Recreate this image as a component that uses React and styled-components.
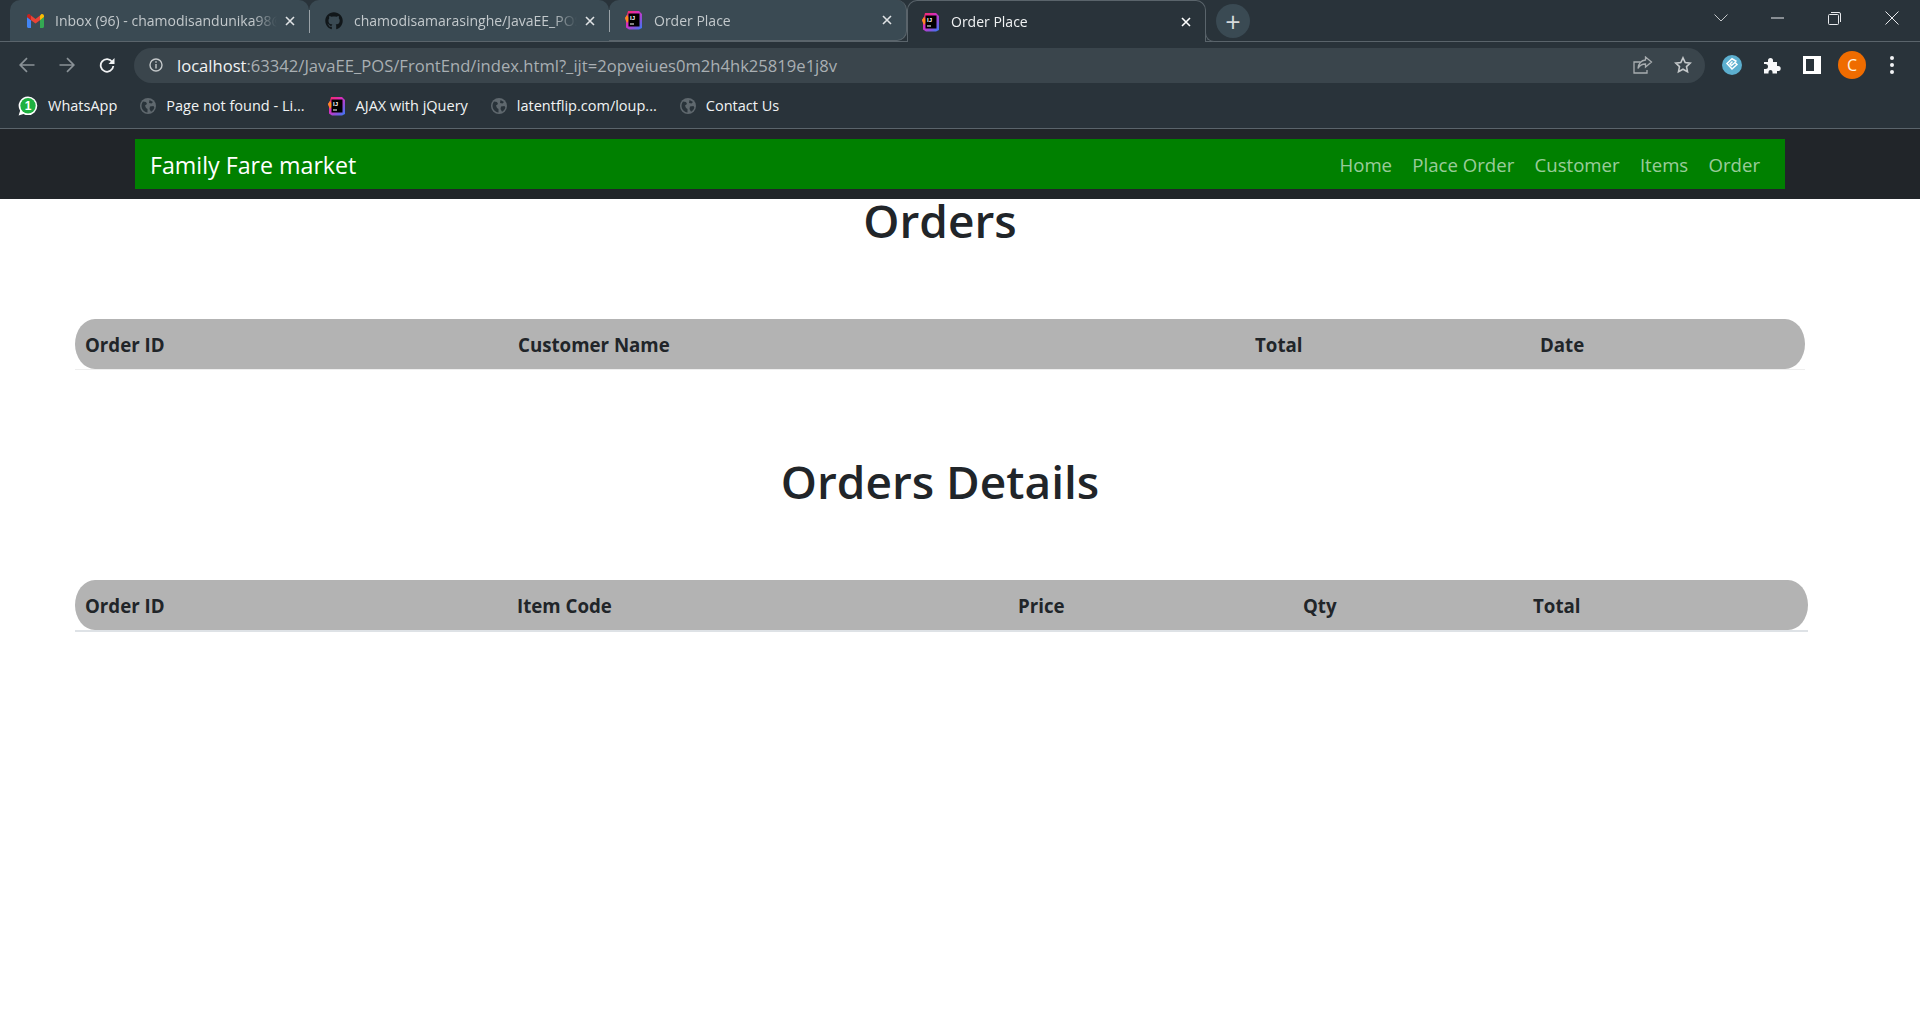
import React from 'react';
import styled, { createGlobalStyle } from 'styled-components';
import { FaGithub } from 'react-icons/fa';

const CHROME = '#29333a';
const TAB = '#3a4a53';
const LINE = '#5a646b';
const UI_FONT = '"Open Sans", "Noto Sans", sans-serif';

const GlobalStyle = createGlobalStyle`
  * { box-sizing: border-box; }
  html, body { margin: 0; background: #ffffff; }
  body { font-family: ${UI_FONT}; color: #212529; min-height: 1030px; overflow: hidden; }
`;

/* ---- small drawings ---- */

const GmailIcon = () => (
  <svg width="17" height="14" viewBox="0 0 17 14">
    <path d="M0 3v9.5C0 13.3.7 14 1.5 14H4V6z" fill="#4285f4" />
    <path d="M17 3v9.5c0 .8-.7 1.5-1.5 1.5H13V6z" fill="#34a853" />
    <path d="M4 6.2V1.5L8.5 5 13 1.5v4.7L8.5 9.6z" fill="#ea4335" />
    <path d="M0 3V2C0 .4 1.8-.5 3 .4l1 1.1v4.7z" fill="#c5221f" />
    <path d="M17 3V2c0-1.6-1.8-2.5-3-1.600l-1 1.100v4.700z" fill="#fbbc04" />
  </svg>
);

const IdeaIcon = ({ id }) => (
  <svg width="18" height="20" viewBox="0 0 18 20">
    <defs>
      <linearGradient id={id} x1="0" y1="0" x2="1" y2="1">
        <stop offset="0" stopColor="#fe2857" />
        <stop offset="0.45" stopColor="#d42fc4" />
        <stop offset="1" stopColor="#2f7cf6" />
      </linearGradient>
    </defs>
    <path d="M3 1h11l3 3v14l-3 1.500H4l-3-2V11L0 8l2-3z" fill={`url(#${id})`} />
    <path d="M0 8l2-3 3 4-3 4z" fill="#ff8a1e" />
    <rect x="3.500" y="3.500" width="11" height="13" fill="#000000" />
    <text x="5" y="9.500" fontSize="6" fontWeight="700" fontFamily="Liberation Sans, sans-serif" fill="#ffffff">IJ</text>
    <rect x="5" y="13.500" width="4" height="1" fill="#ffffff" />
  </svg>
);

const WhatsappIcon = () => (
  <svg width="20" height="20" viewBox="0 0 20 20">
    <path d="M10 .5a9.300 9.300 0 0 1 0 18.600c-1.700 0-3.200-.4-4.500-1.200L.6 19.400l1.500-4.700A9.300 9.300 0 0 1 10 .5z" fill="#ffffff" />
    <circle cx="10" cy="9.800" r="7.700" fill="#1fb141" />
    <text x="10" y="14" textAnchor="middle" fontSize="12" fontWeight="700" fontFamily="Liberation Sans, sans-serif" fill="#ffffff">1</text>
  </svg>
);

const GlobeIcon = () => (
  <svg width="16" height="16" viewBox="0 0 16 16">
    <circle cx="8" cy="8" r="8" fill="#5f686e" />
    <path d="M3 3.500l3 .5 1 2-2 1.500L6 10l1.500 1V14.500C4 14 1.500 11 1.500 8c0-1.800.6-3.300 1.500-4.500zM9.500 2l3.500 2-1.500 1.500-2.500-.5zM10 8.500l3.500-.5.800 1.500c-.5 2-1.600 3.400-3.300 4.200L9.500 11z" fill={CHROME} />
  </svg>
);

const ArrowIcon = ({ $flip }) => (
  <svg width="16" height="16" viewBox="0 0 16 16" fill="none" stroke="#8a9297" strokeWidth="1.700" transform={$flip ? 'scale(-1 1)' : undefined}>
    <path d="M15.500 8H1.500M8 1.200L1.200 8 8 14.800" />
  </svg>
);

const ReloadIcon = () => (
  <svg width="16" height="16" viewBox="0 0 16 16" fill="none">
    <path d="M13.300 5A6.300 6.300 0 1 0 14.300 9" stroke="#f1f3f4" strokeWidth="1.800" />
    <path d="M15.500 1v6h-6z" fill="#f1f3f4" />
  </svg>
);

const InfoIcon = () => (
  <svg width="14" height="14" viewBox="0 0 14 14" fill="none">
    <circle cx="7" cy="7" r="6" stroke="#c4c8ca" strokeWidth="1.400" />
    <path d="M7 6v4.500M7 3.300v1.500" stroke="#c4c8ca" strokeWidth="1.400" />
  </svg>
);

const ShareIcon = () => (
  <svg width="20" height="18" viewBox="0 0 20 18" fill="none" stroke="#a8adb0" strokeWidth="1.300">
    <path d="M7.500 6H1v11h13v-3" />
    <path d="M12.500 1l6 5-6 5V8C9 8 6.500 9.500 5 12.500 5.500 8 8 4.500 12.500 4z" />
  </svg>
);

const StarIcon = () => (
  <svg width="18" height="18" viewBox="0 0 18 18" fill="none" stroke="#c4c8ca" strokeWidth="1.600">
    <path d="M9 1.800l2.200 4.700 5 .600-3.700 3.500 1 5.100L9 13.200l-4.500 2.500 1-5.100L1.800 7.100l5-.600z" />
  </svg>
);

const ExtensionBadge = () => (
  <svg width="20" height="20" viewBox="0 0 20 20" fill="none">
    <circle cx="10" cy="10" r="10" fill="#5cafcf" />
    <path d="M14.500 6.500L10 3.800 5 8.500l5 5.500 5-4.500-2-2-3.500 3-1.500-1.500 2.500-2.500" stroke="#ffffff" strokeWidth="1.500" />
  </svg>
);

const PuzzleIcon = () => (
  <svg width="18" height="18" viewBox="0 0 18 18">
    <path d="M1 6h4V4.500a2.500 2.500 0 0 1 5 0V6h4v4h1.200a2.500 2.500 0 0 1 0 5H14v2.500H9.500V16a2 2 0 0 0-4 0v1.500H1V13h1.500a2.500 2.500 0 0 0 0-5H1z" fill="#f8f9fa" />
  </svg>
);

const PanelIcon = () => (
  <svg width="18" height="18" viewBox="0 0 18 18">
    <path d="M0 0h18v18H0z" fill="#ffffff" />
    <path d="M3 3h8v12H3z" fill={CHROME} />
  </svg>
);

const MinimizeIcon = () => (
  <svg width="14" height="2" viewBox="0 0 14 2"><path d="M0 1h13" stroke="#e8eaed" strokeWidth="1" /></svg>
);

const RestoreIcon = () => (
  <svg width="13" height="13" viewBox="0 0 13 13" fill="none" stroke="#e8eaed" strokeWidth="1">
    <rect x=".5" y="2.500" width="10" height="10" rx="1" />
    <path d="M3 .5h8a1.500 1.500 0 0 1 1.500 1.500v8" />
  </svg>
);

const CloseIcon = () => (
  <svg width="14" height="14" viewBox="0 0 14 14" fill="none" stroke="#e8eaed" strokeWidth="1"><path d="M.5.5l13 13M13.500.5l-13 13" /></svg>
);

const ChevronIcon = () => (
  <svg width="14" height="8" viewBox="0 0 14 8" fill="none" stroke="#c4c8ca" strokeWidth="1"><path d="M.5.5L7 7 13.500.5" /></svg>
);

const TabCloseIcon = ({ $active }) => (
  <svg width="10" height="10" viewBox="0 0 10 10" fill="none" stroke={$active ? '#ffffff' : '#dfe2e4'} strokeWidth="1.600"><path d="M1 1l8 8M9 1l-8 8" /></svg>
);

/* ---- browser chrome ---- */

const Chrome = styled.header`
  background: ${CHROME};
  border-bottom: 1px solid ${LINE};
`;

const TabStrip = styled.div`
  display: flex;
  height: 42px;
  padding-left: 10px;
  border-bottom: 1px solid ${LINE};
`;

const Tab = styled.div`
  position: relative;
  display: flex;
  align-items: center;
  flex: 0 0 ${(p) => p.$width}px;
  min-width: 0;
  height: ${(p) => (p.$active ? 42 : 41)}px;
  padding: 0 14px 0 ${(p) => (p.$active ? 14 : 16)}px;
  background: ${(p) => (p.$active ? CHROME : TAB)};
  color: ${(p) => (p.$active ? '#f1f3f4' : '#c3c9cc')};
  border-radius: 10px 10px ${(p) => (p.$beforeActive ? '10px' : '0')} 0;
  ${(p) => p.$active && `border: 1px solid ${LINE}; border-bottom: 0;`}
  ${(p) => p.$beforeActive && `border-right: 1px solid ${LINE}; border-bottom: 1px solid ${LINE};`}

  &::before {
    content: '';
    display: ${(p) => (p.$divider ? 'block' : 'none')};
    position: absolute;
    left: 0;
    top: 10px;
    bottom: 8px;
    width: 1px;
    background: #9aa2a7;
  }

  &::after {
    content: '';
    display: ${(p) => (p.$active ? 'block' : 'none')};
    position: absolute;
    left: 100%;
    bottom: 0;
    width: 9px;
    height: 9px;
    background: ${CHROME};
    border-left: 1px solid ${LINE};
    border-bottom: 1px solid ${LINE};
    border-bottom-left-radius: 9px;
  }
`;

const Favicon = styled.span`
  display: flex;
  justify-content: center;
  flex: 0 0 18px;
  margin-right: 11px;
`;

const TabTitle = styled.span`
  flex: 1;
  min-width: 0;
  font-size: 14px;
  white-space: nowrap;
  overflow: hidden;
  mask-image: linear-gradient(to right, #000 calc(100% - 24px), transparent);
`;

const TabClose = styled.span`
  display: flex;
  flex: 0 0 10px;
  margin-left: 8px;
`;

const NewTab = styled.div`
  display: flex;
  align-items: center;
  justify-content: center;
  width: 34px;
  height: 34px;
  margin: 4px 0 0 10px;
  border-radius: 50%;
  background: ${TAB};
  color: #d5d9db;
  font-size: 27px;
  font-weight: 400;
  line-height: 1;
`;

const WindowButtons = styled.div`
  display: flex;
  margin-left: auto;
`;

const WindowButton = styled.div`
  display: flex;
  align-items: center;
  justify-content: center;
  width: 57px;
  height: 36px;
`;

const Toolbar = styled.div`
  display: flex;
  align-items: center;
  height: 47px;
  padding: 5px 0 6px 7px;
`;

const ToolButton = styled.div`
  display: flex;
  align-items: center;
  justify-content: center;
  flex: 0 0 ${(p) => p.$width || 40}px;
`;

const AddressBar = styled.div`
  display: flex;
  align-items: center;
  flex: 0 0 1571px;
  height: 35px;
  margin-left: 7px;
  padding: 0 2px 0 15px;
  background: #3a454c;
  border-radius: 18px;
`;

const Url = styled.div`
  flex: 1;
  margin-left: 14px;
  font-size: 16.600px;
  color: #a9afb3;
  white-space: nowrap;

  b {
    font-weight: 400;
    color: #f1f3f4;
  }
`;

const ToolbarActions = styled.div`
  display: flex;
  align-items: center;
  margin-left: 7px;
`;

const Avatar = styled.div`
  display: flex;
  align-items: center;
  justify-content: center;
  width: 28px;
  height: 28px;
  border-radius: 50%;
  background: #ef6c00;
  color: #fff3e0;
  font-size: 16px;
`;

const KebabDots = styled.div`
  display: flex;
  flex-direction: column;
  gap: 3px;

  i {
    display: block;
    width: 4px;
    height: 4px;
    border-radius: 50%;
    background: #f1f3f4;
  }
`;

const BookmarksBar = styled.div`
  display: flex;
  align-items: center;
  height: 39px;
  padding: 0 0 6px 18px;
`;

const Bookmark = styled.div`
  display: flex;
  align-items: center;
  gap: 10px;
  margin-right: 23px;
  color: #f1f3f4;
  font-size: 14.500px;
  white-space: nowrap;
`;

/* ---- page ---- */

const Navbar = styled.nav`
  padding: 10px 135px;
  background: #212529;
`;

const NavInner = styled.div`
  display: flex;
  align-items: center;
  justify-content: space-between;
  height: 50px;
  padding: 0 25px 0 15px;
  background: #008000;
`;

const Brand = styled.a`
  padding-top: 1px;
  color: #ffffff;
  font-size: 23.200px;
`;

const NavLinks = styled.div`
  display: flex;
  gap: 20.300px;
  padding-top: 1px;
`;

const NavLink = styled.a`
  color: rgba(255, 255, 255, 0.62);
  font-size: 18.600px;
`;

const Main = styled.main`
  padding: 0 0 0 75px;
`;

const Heading = styled.h1`
  width: 1730px;
  margin: ${(p) => p.$top}px 0 ${(p) => p.$bottom}px;
  font-size: 46px;
  font-weight: 600;
  line-height: 60px;
  text-align: center;
  color: #212529;
`;

const Table = styled.table`
  width: ${(p) => p.$width}px;
  table-layout: fixed;
  border-collapse: separate;
  border-spacing: 0;
  border-bottom: ${(p) => (p.$strong ? '2px solid #dee2e6' : '1px solid #eeeeee')};
`;

const HeadCell = styled.th`
  height: 50px;
  padding: 0 0 0 10px;
  background: #b3b3b3;
  color: #212529;
  font-size: 18.700px;
  font-weight: 700;
  text-align: left;

  &:first-child { border-radius: 20px 0 0 20px / 25px 0 0 25px; }
  &:last-child { border-radius: 0 20px 20px 0 / 0 25px 25px 0; }
`;

const tabs = [
  { title: 'Inbox (96) - chamodisandunika98@gmail.com', icon: <GmailIcon />, width: 299 },
  { title: 'chamodisamarasinghe/JavaEE_POS', icon: <FaGithub size={18} color="#11171a" />, width: 300, divider: true },
  { title: 'Order Place', icon: <IdeaIcon id="idea-tab-3" />, width: 298, divider: true, beforeActive: true },
  { title: 'Order Place', icon: <IdeaIcon id="idea-tab-4" />, width: 299, active: true },
];

const bookmarks = [
  { title: 'WhatsApp', icon: <WhatsappIcon /> },
  { title: 'Page not found - Li...', icon: <GlobeIcon /> },
  { title: 'AJAX with jQuery', icon: <IdeaIcon id="idea-bookmark" /> },
  { title: 'latentflip.com/loup...', icon: <GlobeIcon /> },
  { title: 'Contact Us', icon: <GlobeIcon /> },
];

const navItems = ['Home', 'Place Order', 'Customer', 'Items', 'Order'];

const OrderTable = ({ width, columns, strong }) => (
  <Table $width={width} $strong={strong}>
    <colgroup>
      {columns.map(([label, size]) => <col key={label} width={size} />)}
    </colgroup>
    <thead>
      <tr>
        {columns.map(([label]) => <HeadCell key={label}>{label}</HeadCell>)}
      </tr>
    </thead>
  </Table>
);

const App = () => {
  return (
    <>
      <GlobalStyle />
      <Chrome>
        <TabStrip>
          {tabs.map((tab, i) => (
            <Tab key={i} $width={tab.width} $active={tab.active} $divider={tab.divider} $beforeActive={tab.beforeActive}>
              <Favicon>{tab.icon}</Favicon>
              <TabTitle>{tab.title}</TabTitle>
              <TabClose><TabCloseIcon $active={tab.active} /></TabClose>
            </Tab>
          ))}
          <NewTab>+</NewTab>
          <WindowButtons>
            <WindowButton><ChevronIcon /></WindowButton>
            <WindowButton><MinimizeIcon /></WindowButton>
            <WindowButton><RestoreIcon /></WindowButton>
            <WindowButton><CloseIcon /></WindowButton>
          </WindowButtons>
        </TabStrip>
        <Toolbar>
          <ToolButton><ArrowIcon /></ToolButton>
          <ToolButton><ArrowIcon $flip /></ToolButton>
          <ToolButton><ReloadIcon /></ToolButton>
          <AddressBar>
            <InfoIcon />
            <Url><b>localhost</b>:63342/JavaEE_POS/FrontEnd/index.html?_ijt=2opveiues0m2h4hk25819e1j8v</Url>
            <ToolButton><ShareIcon /></ToolButton>
            <ToolButton><StarIcon /></ToolButton>
          </AddressBar>
          <ToolbarActions>
            <ToolButton><ExtensionBadge /></ToolButton>
            <ToolButton><PuzzleIcon /></ToolButton>
            <ToolButton><PanelIcon /></ToolButton>
            <ToolButton><Avatar>C</Avatar></ToolButton>
            <ToolButton><KebabDots><i /><i /><i /></KebabDots></ToolButton>
          </ToolbarActions>
        </Toolbar>
        <BookmarksBar>
          {bookmarks.map((item) => (
            <Bookmark key={item.title}>
              {item.icon}
              {item.title}
            </Bookmark>
          ))}
        </BookmarksBar>
      </Chrome>
      <Navbar>
        <NavInner>
          <Brand>Family Fare market</Brand>
          <NavLinks>
            {navItems.map((item) => <NavLink key={item}>{item}</NavLink>)}
          </NavLinks>
        </NavInner>
      </Navbar>
      <Main>
        <Heading $top={-9} $bottom={69}>Orders</Heading>
        <OrderTable
          width={1730}
          columns={[['Order ID', 433], ['Customer Name', 737], ['Total', 285], ['Date', 275]]}
        />
        <Heading $top={81} $bottom={69}>Orders Details</Heading>
        <OrderTable
          width={1733}
          strong
          columns={[['Order ID', 432], ['Item Code', 501], ['Price', 285], ['Qty', 230], ['Total', 285]]}
        />
      </Main>
    </>
  );
};

export default App;
